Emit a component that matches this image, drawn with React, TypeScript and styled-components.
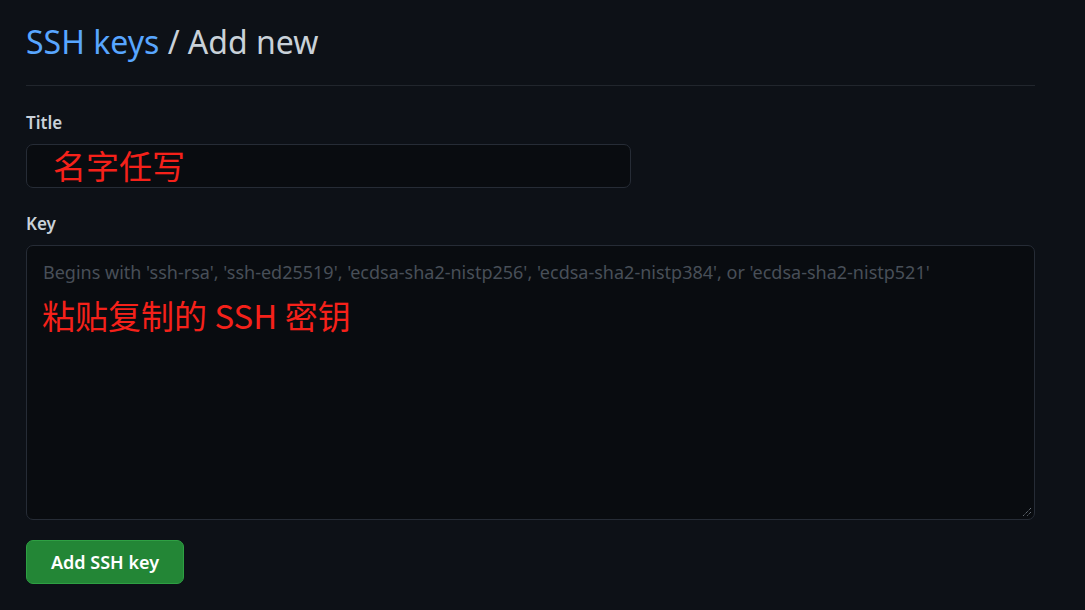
import React from "react";
import styled, { createGlobalStyle } from "styled-components";

const Global = createGlobalStyle`
  html, body { margin: 0; padding: 0; background: #0d1117; }
  body { font-family: "Noto Sans", "Open Sans", sans-serif; color: #c9d1d9; }
  * { box-sizing: border-box; }
`;

const Page = styled.div`
  width: 1085px;
  height: 610px;
  background: #0d1117;
  padding: 19px 50px 0 26px;
`;

const Header = styled.h2`
  margin: 0;
  padding-bottom: 21px;
  border-bottom: 1px solid #21262d;
  font-size: 32px;
  font-weight: 400;
  line-height: 45px;
  color: #c9d1d9;
`;

const Crumb = styled.a`
  color: #58a6ff;
  text-decoration: none;
`;

const Form = styled.form`
  display: flex;
  flex-direction: column;
  padding-top: 26px;
`;

const Group = styled.div<{ $gap: number }>`
  display: flex;
  flex-direction: column;
  margin-bottom: ${(p) => p.$gap}px;
`;

const Label = styled.label`
  font-size: 17px;
  font-weight: 600;
  line-height: 22px;
  color: #c9d1d9;
  margin-bottom: 10px;
`;

const Field = styled.div<{ $w?: number; $h: number }>`
  width: ${(p) => (p.$w ? `${p.$w}px` : "100%")};
  height: ${(p) => p.$h}px;
  background: #090c10;
  border: 1px solid #262c36;
  border-radius: 7px;
  position: relative;
`;

const Note = styled.div<{ $left: number; $top: number }>`
  padding: ${(p) => p.$top}px 0 0 ${(p) => p.$left}px;
  font-family: "Noto Sans CJK SC", "Noto Sans", sans-serif;
  font-size: 33px;
  line-height: 40px;
  color: #f5211a;
`;

const Placeholder = styled.div`
  padding: 13px 0 0 16px;
  font-size: 18px;
  line-height: 26px;
  color: #484f58;
  white-space: nowrap;
`;

const Grip = styled.svg`
  position: absolute;
  right: 2px;
  bottom: 2px;
`;

const Button = styled.button`
  align-self: flex-start;
  width: 158px;
  height: 44px;
  background: #238636;
  border: 1px solid #2ea043;
  border-radius: 7px;
  color: #ffffff;
  font-family: "Noto Sans", "Open Sans", sans-serif;
  font-size: 18px;
  font-weight: 600;
  padding: 0;
`;

export default function App() {
  return (
    <Page>
      <Global />
      <Header>
        <Crumb href="#">SSH keys</Crumb> / Add new
      </Header>
      <Form>
        <Group $gap={25}>
          <Label>Title</Label>
          <Field $w={605} $h={44}>
            <Note $left={26} $top={0}>名字任写</Note>
          </Field>
        </Group>
        <Group $gap={20}>
          <Label>Key</Label>
          <Field $h={275}>
            <Placeholder>
              Begins with 'ssh-rsa', 'ssh-ed25519', 'ecdsa-sha2-nistp256', 'ecdsa-sha2-nistp384', or 'ecdsa-sha2-nistp521'
            </Placeholder>
            <Note $left={15} $top={10}>粘贴复制的 SSH 密钥</Note>
            <Grip width="12" height="12" viewBox="0 0 12 12">
              <path d="M11 3 L3 11 M11 7 L7 11" stroke="#8b949e" strokeWidth="1" strokeDasharray="1 1" />
            </Grip>
          </Field>
        </Group>
        <Button type="button">Add SSH key</Button>
      </Form>
    </Page>
  );
}
